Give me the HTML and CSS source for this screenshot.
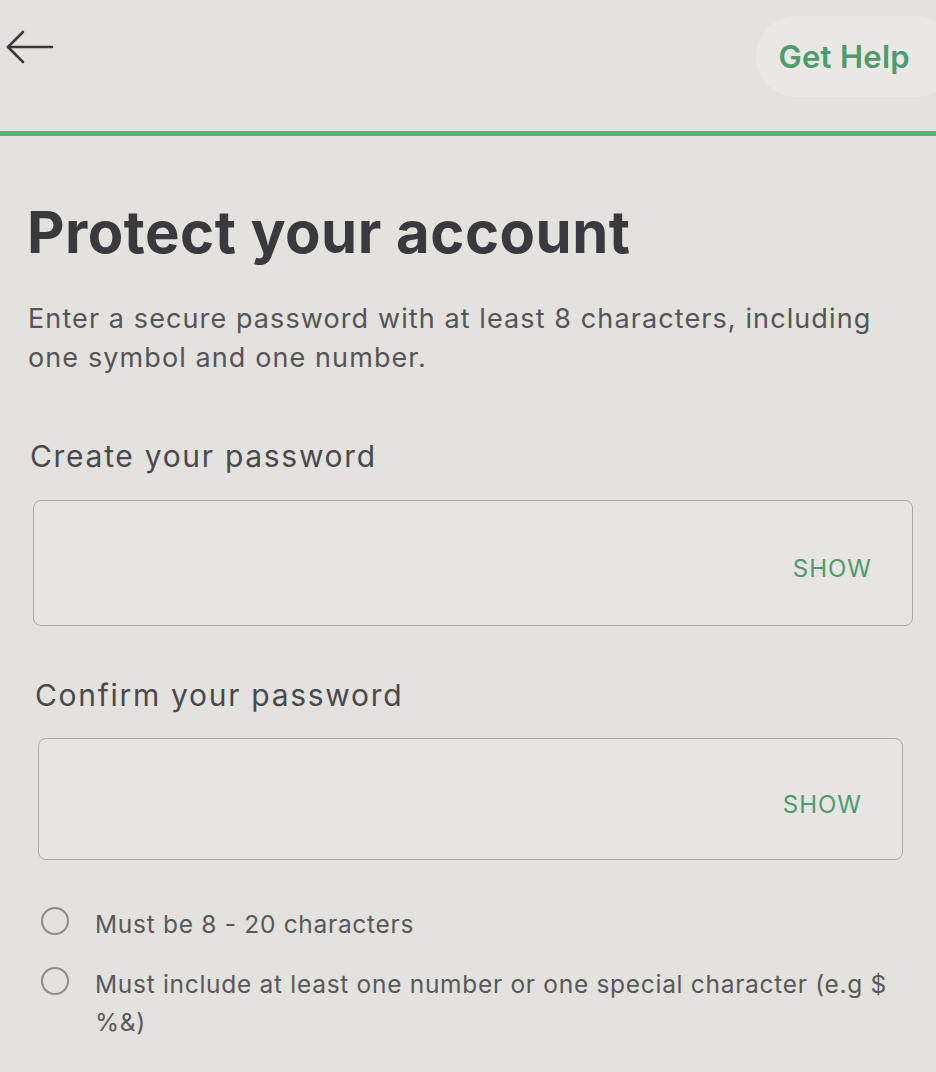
FILE: index.html
```html
<!DOCTYPE html>
<html lang="en">
<head>
<meta charset="utf-8">
<title>Protect your account</title>
<link rel="stylesheet" href="styles.css">
</head>
<body>
<header class="topbar">
  <button class="back" aria-label="Back">
    <svg width="48" height="40" viewBox="0 0 48 40" fill="none" stroke="#3a3a3c" stroke-width="2.6" stroke-linecap="round" stroke-linejoin="round">
      <path d="M2 20 H46"/>
      <path d="M17 5 L2 20 L17 35"/>
    </svg>
  </button>
  <button class="help">Get Help</button>
</header>
<div class="progress"></div>
<main class="content">
  <h1 class="title">Protect your account</h1>
  <p class="intro">Enter a secure password with at least 8 characters, including one symbol and one number.</p>

  <label class="field-label first">Create your password</label>
  <div class="field field-one">
    <span class="show">SHOW</span>
  </div>

  <label class="field-label second">Confirm your password</label>
  <div class="field field-two">
    <span class="show">SHOW</span>
  </div>

  <ul class="rules">
    <li class="rule"><span class="radio"></span><span class="rule-text">Must be 8 - 20 characters</span></li>
    <li class="rule"><span class="radio"></span><span class="rule-text">Must include at least one number or one special character (e.g $ %&amp;)</span></li>
  </ul>
</main>
</body>
</html>
```

FILE: styles.css
```css
* { box-sizing: border-box; }

html, body {
  margin: 0;
  padding: 0;
}

body {
  width: 936px;
  height: 1072px;
  overflow: hidden;
  background: #e3e2de;
  font-family: Inter, "Liberation Sans", sans-serif;
  color: #3b3a3e;
}

.topbar {
  height: 131px;
  display: flex;
  justify-content: space-between;
  align-items: flex-start;
  padding: 16px 0 0 6px;
}

.back {
  margin-top: 11px;
  padding: 0;
  border: 0;
  background: none;
  width: 48px;
  height: 40px;
  display: flex;
}

.help {
  height: 81px;
  margin-right: -20px;
  padding: 0 46px 0 22px;
  border: 0;
  border-radius: 40px;
  background: #e9e8e4;
  color: #4f9b6d;
  font-family: Inter, "Liberation Sans", sans-serif;
  font-size: 31px;
  font-weight: 600;
  letter-spacing: 0.3px;
}

.progress {
  height: 5px;
  background: #58b179;
}

.content {
  padding: 0 23px 0 28px;
}

.title {
  margin: 63px 0 0 -1px;
  font-size: 58px;
  line-height: 66px;
  font-weight: 700;
  letter-spacing: 0.5px;
  color: #3a393d;
}

.intro {
  margin: 34px 0 0;
  font-size: 27px;
  line-height: 39px;
  color: #555458;
  letter-spacing: 1.1px;
  max-width: 860px;
}

.field-label {
  display: block;
  font-size: 30px;
  line-height: 36px;
  color: #4a494d;
  letter-spacing: 1.7px;
}

.field-label.first {
  margin: 61px 0 0 2px;
}

.field-label.second {
  margin: 51px 0 0 7px;
}

.field {
  border: 1.5px solid #a9a8a6;
  border-radius: 8px;
  background: #e6e5e1;
  display: flex;
  justify-content: flex-end;
  align-items: center;
}

.field-one {
  margin: 26px 0 0 5px;
  height: 126px;
  padding: 10px 40px 0 0;
}

.field-two {
  margin: 25px 10px 0 10px;
  height: 122px;
  padding: 10px 40px 0 0;
}

.show {
  font-size: 24px;
  color: #4f9a70;
  letter-spacing: 1px;
}

.rules {
  list-style: none;
  margin: 45px 0 0;
  padding: 0 0 0 13px;
  display: flex;
  flex-direction: column;
  gap: 22px;
}

.rule {
  display: flex;
  align-items: flex-start;
  gap: 26px;
  max-width: 860px;
}

.radio {
  flex: none;
  width: 28px;
  height: 28px;
  margin-top: 2px;
  border: 2px solid #8d8c8b;
  border-radius: 50%;
}

.rule-text {
  font-size: 24.5px;
  line-height: 38px;
  color: #59585b;
  letter-spacing: 0.7px;
}
```
